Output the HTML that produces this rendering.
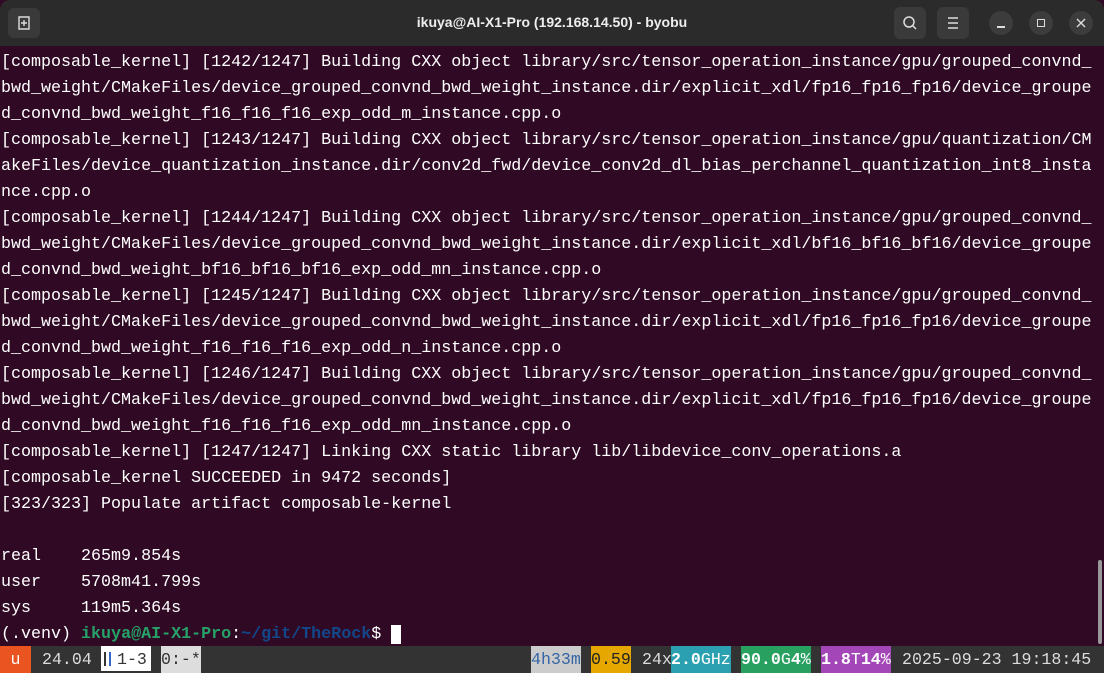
<!DOCTYPE html>
<html><head><meta charset="utf-8"><style>
*{margin:0;padding:0;box-sizing:border-box}
body{width:1104px;height:673px;background:#300a24;overflow:hidden;position:relative;font-family:"Liberation Mono",monospace}
.tb{position:absolute;left:0;top:0;width:1104px;height:46px;background:#2b2b2b;border-radius:10px 10px 0 0}
.title{position:absolute;left:0;right:0;top:14px;text-align:center;color:#eee;font:bold 14px "Liberation Sans",sans-serif}
.btn{position:absolute;background:#3a3a3a;border-radius:6px}
.cb{position:absolute;width:24px;height:24px;border-radius:12px;background:#3c3c3c;top:11px}
.term{position:absolute;left:1px;top:50px;color:#fff;font-size:16.68px;line-height:26px;white-space:pre;letter-spacing:0}
.g{color:#26a269;font-weight:bold}.b{color:#12488b;font-weight:bold}
.sb{position:absolute;left:0;top:646px;width:1104px;height:27px;background:#333;font-size:16.6px;line-height:27px;color:#ddd;white-space:pre}
.sb span{position:absolute;top:0;height:27px;overflow:hidden}
</style></head><body>
<div class="tb">
<div class="btn" style="left:8px;top:8px;width:32px;height:30px"></div>
<svg style="position:absolute;left:17px;top:15px" width="14" height="16" viewBox="0 0 14 16"><path d="M2 2h10v12H2z" fill="none" stroke="#ddd" stroke-width="1.4"/><path d="M7 5v6M4 8h6" stroke="#ddd" stroke-width="1.4"/></svg>
<div class="title">ikuya@AI-X1-Pro (192.168.14.50) - byobu</div>
<div class="btn" style="left:894px;top:7px;width:32px;height:32px"></div>
<svg style="position:absolute;left:902px;top:15px" width="16" height="16"><circle cx="7" cy="7" r="5" fill="none" stroke="#ddd" stroke-width="1.5"/><path d="M10.5 10.5L14 14" stroke="#ddd" stroke-width="1.5"/></svg>
<div class="btn" style="left:937px;top:7px;width:32px;height:32px"></div>
<svg style="position:absolute;left:947px;top:16px" width="12" height="14"><path d="M1 2h10M1 7h10M1 12h10" stroke="#ddd" stroke-width="1.4"/></svg>
<div class="cb" style="left:989px"></div><div style="position:absolute;left:997px;top:26px;width:8px;height:1.5px;background:#ddd"></div>
<div class="cb" style="left:1029px"></div><div style="position:absolute;left:1037px;top:19px;width:8px;height:8px;border:1.4px solid #ddd"></div>
<div class="cb" style="left:1069px"></div><svg style="position:absolute;left:1076px;top:18px" width="10" height="10"><path d="M1 1l8 8M9 1l-8 8" stroke="#ddd" stroke-width="1.4"/></svg>
</div>
<div class="term">[composable_kernel] [1242/1247] Building CXX object library/src/tensor_operation_instance/gpu/grouped_convnd_
bwd_weight/CMakeFiles/device_grouped_convnd_bwd_weight_instance.dir/explicit_xdl/fp16_fp16_fp16/device_groupe
d_convnd_bwd_weight_f16_f16_f16_exp_odd_m_instance.cpp.o
[composable_kernel] [1243/1247] Building CXX object library/src/tensor_operation_instance/gpu/quantization/CM
akeFiles/device_quantization_instance.dir/conv2d_fwd/device_conv2d_dl_bias_perchannel_quantization_int8_insta
nce.cpp.o
[composable_kernel] [1244/1247] Building CXX object library/src/tensor_operation_instance/gpu/grouped_convnd_
bwd_weight/CMakeFiles/device_grouped_convnd_bwd_weight_instance.dir/explicit_xdl/bf16_bf16_bf16/device_groupe
d_convnd_bwd_weight_bf16_bf16_bf16_exp_odd_mn_instance.cpp.o
[composable_kernel] [1245/1247] Building CXX object library/src/tensor_operation_instance/gpu/grouped_convnd_
bwd_weight/CMakeFiles/device_grouped_convnd_bwd_weight_instance.dir/explicit_xdl/fp16_fp16_fp16/device_groupe
d_convnd_bwd_weight_f16_f16_f16_exp_odd_n_instance.cpp.o
[composable_kernel] [1246/1247] Building CXX object library/src/tensor_operation_instance/gpu/grouped_convnd_
bwd_weight/CMakeFiles/device_grouped_convnd_bwd_weight_instance.dir/explicit_xdl/fp16_fp16_fp16/device_groupe
d_convnd_bwd_weight_f16_f16_f16_exp_odd_mn_instance.cpp.o
[composable_kernel] [1247/1247] Linking CXX static library lib/libdevice_conv_operations.a
[composable_kernel SUCCEEDED in 9472 seconds]
[323/323] Populate artifact composable-kernel

real    265m9.854s
user    5708m41.799s
sys     119m5.364s
(.venv) <span class="g">ikuya@AI-X1-Pro</span>:<span class="b">~/git/TheRock</span>$ <span style="background:#fff"> </span></div>
<div style="position:absolute;left:1098px;top:560px;width:4px;height:84px;background:#999;border-radius:2px"></div>
<div class="sb">
<span style="left:0;width:31px;background:#e95420;color:#fff;text-align:center">u</span>
<span style="left:42px">24.04</span>
<span style="left:101px;width:50px;background:#fff;color:#333;border-bottom:2px solid #333"><i style="position:absolute;left:3px;top:6px;width:2px;height:14px;background:#333"></i><i style="position:absolute;left:8px;top:6px;width:2px;height:14px;background:#36c"></i><span style="left:16px;overflow:visible">1-3</span></span>
<span style="left:161px;width:40px;background:#ddd;color:#333">0:-*</span>
<span style="left:531px;width:50px;background:#ccc;color:#3465a4">4h33m</span>
<span style="left:591px;width:40px;background:#e6a800;color:#222">0.59</span>
<span style="left:642px">24x</span>
<span style="left:671px;width:60px;background:#2aa0b0;color:#fff"><b>2.0</b>GHz</span>
<span style="left:741px;width:70px;background:#27a060;color:#fff"><b>90.0</b>G<b>4</b>%</span>
<span style="left:821px;width:70px;background:#a347b8;color:#fff"><b>1.8</b>T<b>14</b>%</span>
<span style="left:902px">2025-09-23 19:18:45</span>
</div>
</body></html>
